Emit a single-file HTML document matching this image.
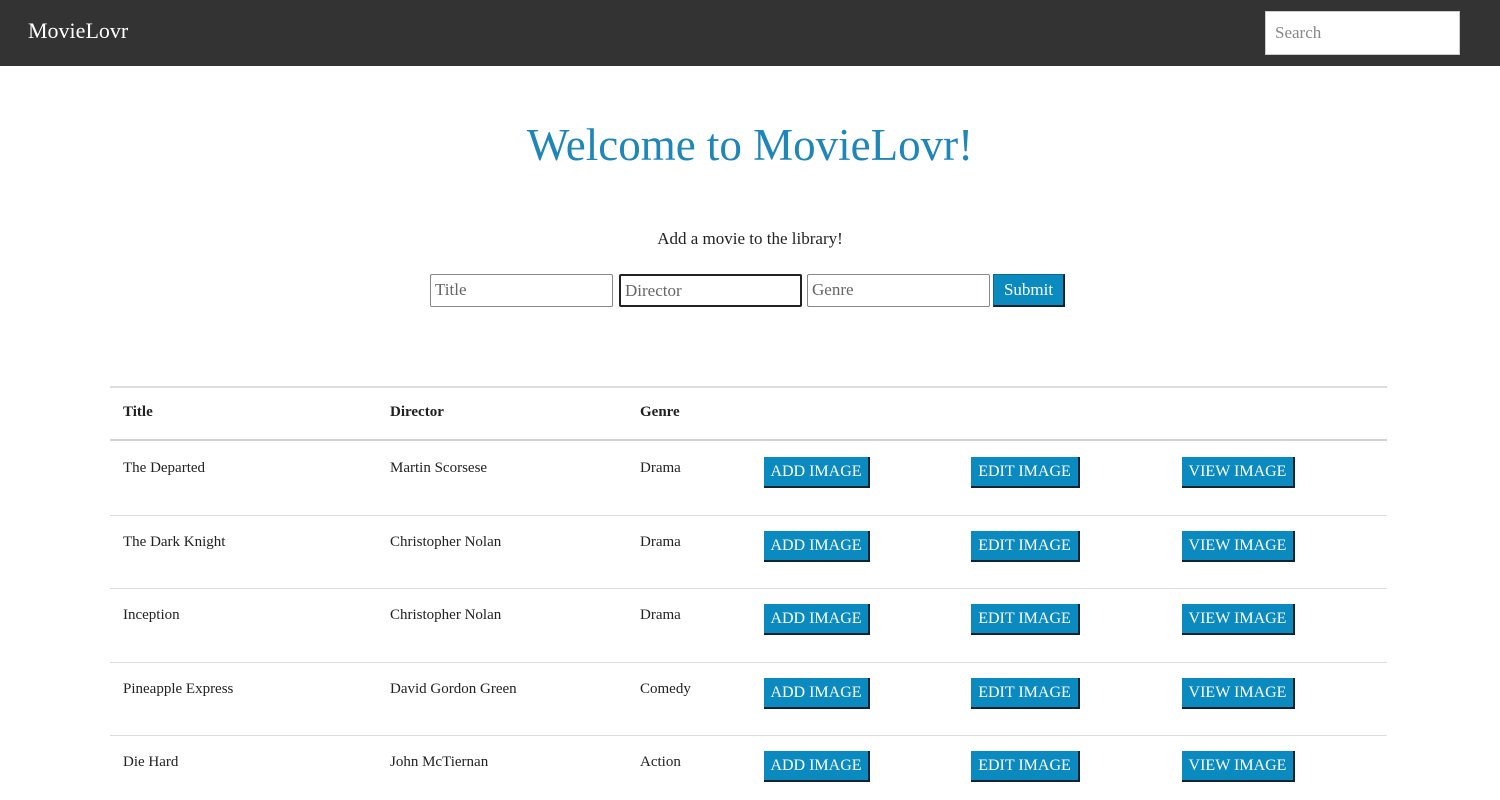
<!DOCTYPE html>
<html><head><style>
*{box-sizing:border-box}
body{margin:0;width:1500px;height:800px;overflow:hidden;background:#fff;font-family:"Liberation Serif",serif;color:#222}
.nav{height:66px;background:#333;position:relative}
.brand{position:absolute;left:28px;top:18px;color:#fff;font-size:22px}
.search{position:absolute;left:1265px;top:11px;width:195px;height:44px;background:#fff;border:1px solid #ccc;color:#888;font-size:17px;padding:11px 9px}
h1{position:absolute;top:119px;left:0;width:1500px;text-align:center;margin:0;font-weight:normal;color:#1f86b8;font-size:45px}
.sub{position:absolute;top:229px;left:0;width:1500px;text-align:center;font-size:17px}
.in{position:absolute;top:274px;height:33px;width:183px;border:1px solid #888;border-radius:2px;font-size:17px;color:#666;padding:5px 4px}
.sb{position:absolute;top:274px;left:993px;width:72px;height:33px;background:#0a8abf;border:1px solid #0a6a90;border-right:2px solid #123;border-bottom:2px solid #123;color:#fff;font-size:17px;text-align:center;line-height:29px}
.line{position:absolute;left:110px;width:1277px;height:1px;background:#ddd}
.t{position:absolute;font-size:15px}
.th{font-weight:bold;font-size:15px}
.b{position:absolute;height:31px;background:#0a8abf;border-right:2px solid #123;border-bottom:2px solid #123;color:#fff;font-size:16px;text-align:center;line-height:29px}
</style></head><body>
<div class="nav"><div class="brand">MovieLovr</div><div class="search">Search</div></div>
<h1>Welcome to MovieLovr!</h1>
<div class="sub">Add a movie to the library!</div>
<div class="in" style="left:430px">Title</div>
<div class="in" style="left:619px;border:2px solid #222">Director</div>
<div class="in" style="left:807px">Genre</div>
<div class="sb">Submit</div>
<div class="line" style="top:386px;height:2px"></div>
<div class="t th" style="left:123px;top:404px">Title</div>
<div class="t th" style="left:390px;top:404px">Director</div>
<div class="t th" style="left:640px;top:404px">Genre</div>
<div class="line" style="top:439px;height:2px;background:#d4d4d4"></div>
<div id="rows"></div>
<script>
var d=[["The Departed","Martin Scorsese","Drama"],["The Dark Knight","Christopher Nolan","Drama"],["Inception","Christopher Nolan","Drama"],["Pineapple Express","David Gordon Green","Comedy"],["Die Hard","John McTiernan","Action"]];
var h="";
d.forEach(function(r,i){var y=441+i*73.6;
h+='<div class="t" style="left:123px;top:'+(y+19)+'px">'+r[0]+'</div><div class="t" style="left:390px;top:'+(y+19)+'px">'+r[1]+'</div><div class="t" style="left:640px;top:'+(y+19)+'px">'+r[2]+'</div>';
h+='<div class="b" style="left:764px;width:106px;top:'+(y+16)+'px">ADD IMAGE</div><div class="b" style="left:971px;width:109px;top:'+(y+16)+'px">EDIT IMAGE</div><div class="b" style="left:1182px;width:113px;top:'+(y+16)+'px">VIEW IMAGE</div>';
if(i<4)h+='<div class="line" style="top:'+(y+73.6)+'px"></div>';});
document.getElementById("rows").innerHTML=h;
</script>
</body></html>
